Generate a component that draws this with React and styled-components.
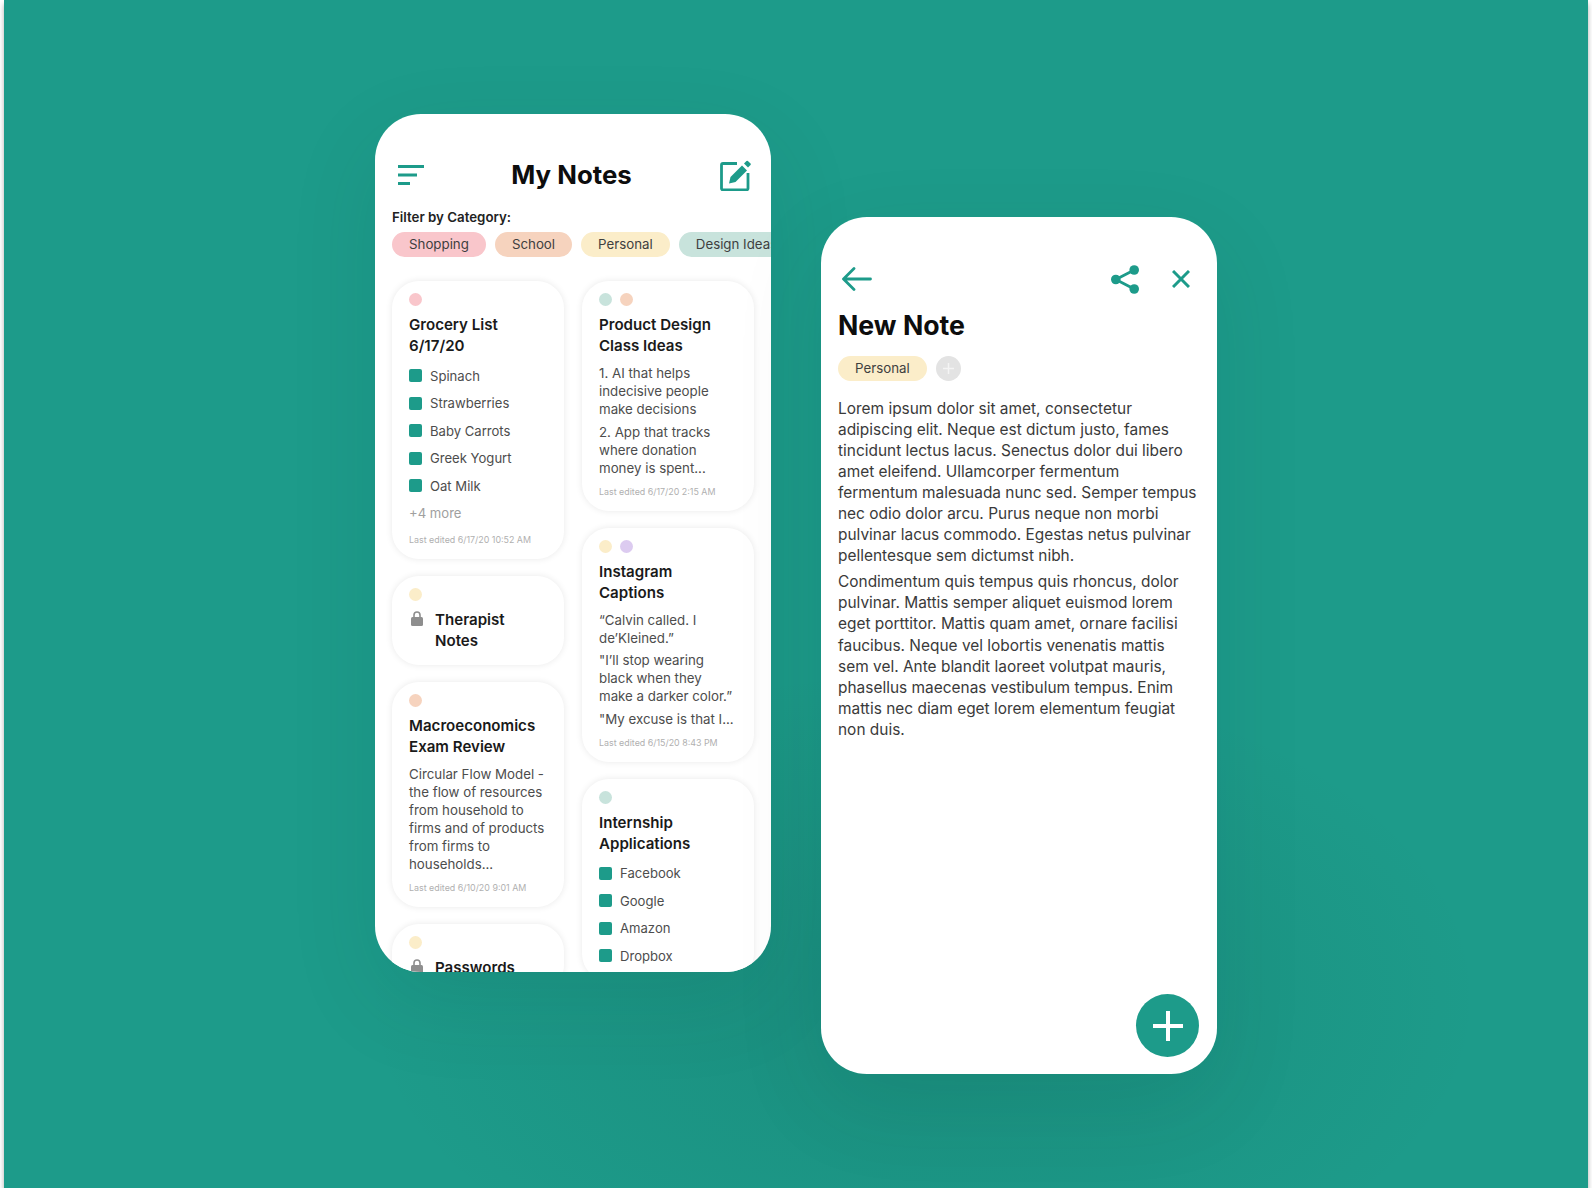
import React from 'react'
import styled, { createGlobalStyle } from 'styled-components'

const teal = '#1d9b8a'

const colors = {
  pink: '#f9c6cb',
  peach: '#f6d3be',
  cream: '#fbedc9',
  mint: '#c8e3dc',
  lilac: '#dccbf0',
}

const GlobalStyle = createGlobalStyle`
  html, body {
    margin: 0;
    padding: 0;
    background: #fff;
  }
  body {
    font-family: Inter, "Liberation Sans", sans-serif;
    color: #333;
  }
  * {
    box-sizing: border-box;
  }
`

const Stage = styled.div`
  margin: 0 4px;
  height: 1188px;
  padding-top: 114px;
  padding-left: 371px;
  display: flex;
  align-items: flex-start;
  gap: 50px;
  overflow: hidden;
  background: radial-gradient(ellipse 560px 330px at 58% 84%, rgba(10, 60, 50, 0.14), rgba(10, 60, 50, 0)), ${teal};
  box-shadow: 0 4px 5px rgba(0, 0, 0, 0.32);
`

const Phone = styled.div`
  position: relative;
  flex: none;
  width: 396px;
  height: ${(p) => p.$height}px;
  margin-top: ${(p) => p.$top || 0}px;
  padding: ${(p) => p.$pad}px 17px 0;
  border-radius: 46px;
  background: #fff;
  overflow: hidden;
  box-shadow: 0 30px 90px rgba(10, 60, 50, 0.1);
`

const Header = styled.div`
  display: flex;
  align-items: center;
  justify-content: space-between;
  height: 32px;
  padding: 0 3px 2px 6px;
`

const Title = styled.h1`
  margin: 0 0 0 -1px;
  font-size: 25.8px;
  line-height: 32px;
  font-weight: 700;
  color: #0d0d0d;
`

const FilterLabel = styled.div`
  margin-top: 17px;
  font-size: 13.3px;
  line-height: 16px;
  font-weight: 600;
  color: #222;
`

const ChipRow = styled.div`
  display: flex;
  gap: 9px;
  margin-top: 7px;
  white-space: nowrap;
`

const Chip = styled.span`
  flex: none;
  height: 25px;
  padding: 0 17px;
  border-radius: 13px;
  background: ${(p) => colors[p.$color]};
  font-size: 13.3px;
  line-height: 25px;
  color: #3f3f3f;
`

const Columns = styled.div`
  display: grid;
  grid-template-columns: 172px 172px;
  gap: 18px;
  margin-top: 24px;
`

const Column = styled.div`
  display: flex;
  flex-direction: column;
  gap: 17px;
`

const Card = styled.div`
  flex: none;
  padding: 12px 12px ${(p) => (p.$locked ? 14 : 13)}px 17px;
  border-radius: 27px;
  background: #fff;
  box-shadow: 0 0 7px rgba(0, 0, 0, 0.09);
`

const Dots = styled.div`
  display: flex;
  gap: 8px;
  margin-bottom: 8px;
`

const Dot = styled.span`
  width: 13px;
  height: 13px;
  border-radius: 50%;
  background: ${(p) => colors[p.$color]};
`

const LockRow = styled.div`
  display: flex;
  gap: 12px;
`

const LockSlot = styled.div`
  flex: none;
  width: 14px;
  padding: 1px 0 0 2px;
`

const CardTitle = styled.h2`
  margin: 0;
  font-size: 15.1px;
  line-height: 21px;
  font-weight: 600;
  color: #1a1a1a;
  white-space: pre-line;
`

const List = styled.div`
  margin: 6px 0 -2px;
`

const Item = styled.div`
  display: flex;
  align-items: center;
  gap: 8px;
  height: 27.5px;
  font-size: 13.1px;
  color: #4d4d4d;
`

const Check = styled.span`
  width: 13px;
  height: 13px;
  border-radius: 2px;
  background: ${teal};
`

const More = styled.div`
  height: 27.5px;
  font-size: 13.1px;
  line-height: 27.5px;
  color: #a0a0a0;
`

const Body = styled.div`
  margin-top: 8px;
`

const Para = styled.p`
  margin: 0 0 4.5px;
  font-size: 13.3px;
  line-height: 18px;
  color: #4d4d4d;
  white-space: pre-line;
  &:last-child {
    margin-bottom: 0;
  }
`

const Meta = styled.div`
  margin-top: 9px;
  font-size: 8.9px;
  line-height: 12px;
  color: #b0b0b0;
  white-space: nowrap;
`

const NoteBar = styled.div`
  display: flex;
  align-items: center;
  height: 28px;
  padding: 0 10px 0 4px;
  gap: 33px;
`

const BackButton = styled.div`
  margin-right: auto;
  display: flex;
`

const NoteTitle = styled.h1`
  margin: 16px 0 0;
  font-size: 26.7px;
  line-height: 32px;
  font-weight: 700;
  color: #0d0d0d;
`

const TagRow = styled.div`
  display: flex;
  gap: 9px;
  margin-top: 15px;
`

const AddTag = styled.span`
  width: 25px;
  height: 25px;
  border-radius: 50%;
  background: #e3e3e3;
  display: flex;
  align-items: center;
  justify-content: center;
`

const NoteText = styled.div`
  margin-top: 16.5px;
`

const NotePara = styled.p`
  margin: 0 0 5px;
  font-size: 15.45px;
  line-height: 21.1px;
  color: #3a3a3a;
  white-space: pre-line;
`

const Fab = styled.div`
  position: absolute;
  right: 18px;
  bottom: 17px;
  width: 63px;
  height: 63px;
  border-radius: 50%;
  background: ${teal};
  display: flex;
  align-items: center;
  justify-content: center;
`

const MenuIcon = () => (
  <svg width="26" height="20" viewBox="0 0 26 20" fill="none" stroke={teal} strokeWidth="3">
    <path d="M0 1.5h26M0 10h19M0 18.5h12" />
  </svg>
)

const EditIcon = () => (
  <svg width="31" height="32" viewBox="0 0 31 32" fill="none">
    <path d="M17 4.500H3a1.500 1.500 0 0 0-1.500 1.500v23.500A1.500 1.500 0 0 0 3 31h23.500a1.500 1.500 0 0 0 1.500-1.500V14" stroke={teal} strokeWidth="2.800" />
    <path d="M9 24.500l1.500-6.500L22 6.500l5 5L15.500 23z" fill={teal} />
    <path d="M24 4.500l2.500-2.500a1 1 0 0 1 1.400 0l2.600 2.600a1 1 0 0 1 0 1.400L28 8.500z" fill={teal} />
  </svg>
)

const LockIcon = ({ color = '#8e8e8e' }) => (
  <svg width="12" height="15" viewBox="0 0 12 15" fill="none">
    <path d="M3 7V4a3 3 0 0 1 6 0v3" stroke={color} strokeWidth="1.600" />
    <rect x="0" y="6" width="12" height="9" rx="1.500" fill={color} />
  </svg>
)

const BackIcon = () => (
  <svg width="30" height="24" viewBox="0 0 30 24" fill="none" stroke={teal} strokeWidth="2.800" strokeLinecap="round" strokeLinejoin="round">
    <path d="M28.500 12H2M12 1.500L1.500 12 12 22.500" />
  </svg>
)

const ShareIcon = () => (
  <svg width="28" height="29" viewBox="0 0 28 29" fill={teal}>
    <circle cx="4.800" cy="14.500" r="4.800" />
    <circle cx="23.200" cy="5" r="4.800" />
    <circle cx="23.200" cy="24" r="4.800" />
    <path d="M4.800 14.500L23.200 5M4.800 14.500L23.200 24" stroke={teal} strokeWidth="2.800" />
  </svg>
)

const CloseIcon = () => (
  <svg width="18" height="18" viewBox="0 0 18 18" fill="none" stroke={teal} strokeWidth="3">
    <path d="M1 1l16 16M17 1L1 17" />
  </svg>
)

const PlusIcon = ({ size, width, color }) => (
  <svg width={size} height={size} viewBox="0 0 30 30" fill="none" stroke={color} strokeWidth={width}>
    <path d="M15 0v30M0 15h30" />
  </svg>
)

const NoteDots = ({ items }) => (
  <Dots>
    {items.map((c) => (
      <Dot key={c} $color={c} />
    ))}
  </Dots>
)

const ChecklistCard = ({ dots, title, items, more, meta }) => (
  <Card>
    <NoteDots items={dots} />
    <CardTitle>{title}</CardTitle>
    <List>
      {items.map((item) => (
        <Item key={item}>
          <Check />
          {item}
        </Item>
      ))}
      {more && <More>{more}</More>}
    </List>
    {meta && <Meta>{meta}</Meta>}
  </Card>
)

const TextCard = ({ dots, title, paragraphs, meta }) => (
  <Card>
    <NoteDots items={dots} />
    <CardTitle>{title}</CardTitle>
    <Body>
      {paragraphs.map((text) => (
        <Para key={text}>{text}</Para>
      ))}
    </Body>
    <Meta>{meta}</Meta>
  </Card>
)

const LockedCard = ({ dots, title }) => (
  <Card $locked>
    <NoteDots items={dots} />
    <LockRow>
      <LockSlot>
        <LockIcon />
      </LockSlot>
      <CardTitle>{title}</CardTitle>
    </LockRow>
  </Card>
)

function App() {
  return (
    <>
      <GlobalStyle />
      <Stage>
        <Phone $height={858} $pad={46}>
          <Header>
            <MenuIcon />
            <Title>My Notes</Title>
            <EditIcon />
          </Header>
          <FilterLabel>Filter by Category:</FilterLabel>
          <ChipRow>
            <Chip $color="pink">Shopping</Chip>
            <Chip $color="peach">School</Chip>
            <Chip $color="cream">Personal</Chip>
            <Chip $color="mint">Design Ideas</Chip>
          </ChipRow>
          <Columns>
            <Column>
              <ChecklistCard
                dots={['pink']}
                title={'Grocery List\n6/17/20'}
                items={['Spinach', 'Strawberries', 'Baby Carrots', 'Greek Yogurt', 'Oat Milk']}
                more="+4 more"
                meta="Last edited 6/17/20 10:52 AM"
              />
              <LockedCard dots={['cream']} title={'Therapist\nNotes'} />
              <TextCard
                dots={['peach']}
                title={'Macroeconomics\nExam Review'}
                paragraphs={[
                  'Circular Flow Model -\nthe flow of resources\nfrom household to\nfirms and of products\nfrom firms to\nhouseholds...',
                ]}
                meta="Last edited 6/10/20 9:01 AM"
              />
              <LockedCard dots={['cream']} title="Passwords" />
            </Column>
            <Column>
              <TextCard
                dots={['mint', 'peach']}
                title={'Product Design\nClass Ideas'}
                paragraphs={[
                  '1. AI that helps\nindecisive people\nmake decisions',
                  '2. App that tracks\nwhere donation\nmoney is spent...',
                ]}
                meta="Last edited 6/17/20 2:15 AM"
              />
              <TextCard
                dots={['cream', 'lilac']}
                title={'Instagram\nCaptions'}
                paragraphs={[
                  '“Calvin called. I\nde’Kleined.”',
                  '"I’ll stop wearing\nblack when they\nmake a darker color.”',
                  '"My excuse is that I...',
                ]}
                meta="Last edited 6/15/20 8:43 PM"
              />
              <ChecklistCard
                dots={['mint']}
                title={'Internship\nApplications'}
                items={['Facebook', 'Google', 'Amazon', 'Dropbox']}
              />
            </Column>
          </Columns>
        </Phone>

        <Phone $height={857} $top={103} $pad={48}>
          <NoteBar>
            <BackButton>
              <BackIcon />
            </BackButton>
            <ShareIcon />
            <CloseIcon />
          </NoteBar>
          <NoteTitle>New Note</NoteTitle>
          <TagRow>
            <Chip $color="cream">Personal</Chip>
            <AddTag>
              <PlusIcon size={11} width={4} color="#f4f4f4" />
            </AddTag>
          </TagRow>
          <NoteText>
            <NotePara>
              {'Lorem ipsum dolor sit amet, consectetur\nadipiscing elit. Neque est dictum justo, fames\ntincidunt lectus lacus. Senectus dolor dui libero\namet eleifend. Ullamcorper fermentum\nfermentum malesuada nunc sed. Semper tempus\nnec odio dolor arcu. Purus neque non morbi\npulvinar lacus commodo. Egestas netus pulvinar\npellentesque sem dictumst nibh.'}
            </NotePara>
            <NotePara>
              {'Condimentum quis tempus quis rhoncus, dolor\npulvinar. Mattis semper aliquet euismod lorem\neget porttitor. Mattis quam amet, ornare facilisi\nfaucibus. Neque vel lobortis venenatis mattis\nsem vel. Ante blandit laoreet volutpat mauris,\nphasellus maecenas vestibulum tempus. Enim\nmattis nec diam eget lorem elementum feugiat\nnon duis.'}
            </NotePara>
          </NoteText>
          <Fab>
            <PlusIcon size={30} width={4} color="#fff" />
          </Fab>
        </Phone>
      </Stage>
    </>
  )
}

export default App
